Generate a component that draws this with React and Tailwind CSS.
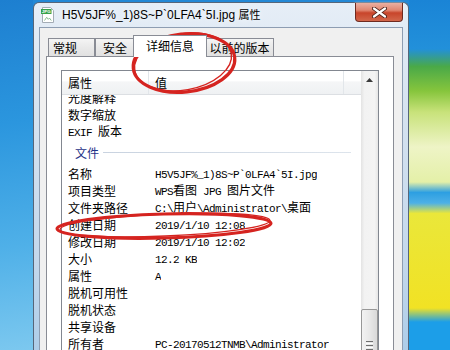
import React from "react";

// splits a string into CJK runs and latin runs (latin is drawn narrow, like SimSun)
const CJK_SPLIT = /([\u3400-\u9fff]+)/;

function Txt({ s }) {
    return s
        .split(CJK_SPLIT)
        .filter(Boolean)
        .map((p, i) =>
            /[\u3400-\u9fff]/.test(p) ? (
                <span
                    key={i}
                    className="text-[12px] tracking-normal [font-family:'Noto_Sans_CJK_SC',sans-serif]"
                >
                    {p}
                </span>
            ) : (
                <span
                    key={i}
                    className="whitespace-pre text-[11px] tracking-[-0.6px] [font-family:'Liberation_Mono','Noto_Sans_CJK_SC',monospace]"
                >
                    {p}
                </span>
            )
        );
}

const topRows = [
    ["光度解释", ""],
    ["数字缩放", ""],
    ["EXIF 版本", ""],
];

const fileRows = [
    ["名称", "H5V5JF%_1)8S~P`0LFA4`5I.jpg"],
    ["项目类型", "WPS看图 JPG 图片文件"],
    ["文件夹路径", "C:\\用户\\Administrator\\桌面"],
    ["创建日期", "2019/1/10 12:08"],
    ["修改日期", "2019/1/10 12:02"],
    ["大小", "12.2 KB"],
    ["属性", "A"],
    ["脱机可用性", ""],
    ["脱机状态", ""],
    ["共享设备", ""],
    ["所有者", "PC-20170512TNMB\\Administrator"],
];

function Row({ name, value }) {
    return (
        <div className="flex h-[17px] items-center leading-[17px] text-black">
            <div className="w-[87px] shrink-0 overflow-hidden whitespace-nowrap pl-[6px]">
                <Txt s={name} />
            </div>
            <div className="overflow-hidden whitespace-nowrap pl-[6px]">
                <Txt s={value} />
            </div>
        </div>
    );
}

function Tab({ label, width, active, extra = "" }) {
    if (active) {
        return (
            <div
                className={`relative z-10 -mb-px flex h-[22px] shrink-0 items-center justify-center border border-b-0 border-[#898c95] bg-white pb-[1px] text-[12px] text-black [font-family:'Noto_Sans_CJK_SC',sans-serif] ${width} ${extra}`}
            >
                {label}
            </div>
        );
    }
    return (
        <div
            className={`flex h-[18px] shrink-0 items-center border border-b-0 border-[#898c95] bg-[linear-gradient(180deg,#f4f4f4,#e9e9e9_50%,#e1e1e1)] text-[12px] text-black [font-family:'Noto_Sans_CJK_SC',sans-serif] ${width} ${extra}`}
        >
            {label}
        </div>
    );
}

export default function App() {
    return (
        <div className="relative flex h-[350px] w-[450px] overflow-hidden bg-[#2388d6]">
            {/* desktop, left */}
            <div className="h-full w-[33px] shrink-0 bg-[linear-gradient(172deg,#1d7fd0_0%,#2b96de_35%,#4fb0e8_70%,#7cc8ef_100%)]" />

            {/* window */}
            <div className="flex w-[376px] shrink-0 flex-col bg-[#2388d6] pt-[2px]">
                <div className="flex flex-1 flex-col rounded-t-[6px] border border-b-0 border-[#56667a] bg-[linear-gradient(180deg,#e6eef7_0%,#d6e3f0_30%,#c4d8ec_70%,#a9cbe8_100%)]">
                    {/* title bar */}
                    <div className="flex h-[24px] shrink-0 items-start">
                        <div className="flex h-full flex-1 items-center pl-[6px]">
                            <svg width="16" height="16" viewBox="0 0 16 16">
                                <path
                                    d="M2.5 0.5h8l3 3v12h-11z"
                                    fill="#fff"
                                    stroke="#a3acb5"
                                />
                                <rect x="1" y="2" width="10.5" height="5" fill="#36a24a" />
                                <text
                                    x="6.2"
                                    y="6.1"
                                    fontSize="4.4"
                                    fill="#fff"
                                    textAnchor="middle"
                                    fontWeight="bold"
                                    fontFamily="Liberation Sans, sans-serif"
                                >
                                    JPG
                                </text>
                                <path
                                    d="M4.5 13.5l2.2-3.2 1.6 2 1.2-1.2 1.8 2.4"
                                    fill="none"
                                    stroke="#78b486"
                                    strokeWidth="0.9"
                                />
                            </svg>
                            <span className="ml-[6px] whitespace-pre text-[12px] text-black [font-family:'Liberation_Sans',sans-serif] [text-shadow:0_0_6px_#ffffff]">
                                H5V5JF%_1)8S~P`0LFA4`5I.jpg{" "}
                                <span className="text-[11px] [font-family:'Noto_Sans_CJK_SC',sans-serif]">
                                    属性
                                </span>
                            </span>
                        </div>
                        <div className="mr-[5px] flex h-[19px] w-[48px] shrink-0 items-center justify-center rounded-b-[4px] border border-t-0 border-[#6e2a20] bg-[linear-gradient(180deg,#eab0a2_0%,#e08670_40%,#c8452b_55%,#d2674b_100%)] shadow-[0_0_3px_#ffffffaa]">
                            <svg width="15" height="11" viewBox="0 0 15 11">
                                <path
                                    d="M2 1.5l11 8M13 1.5l-11 8"
                                    stroke="#4a2018"
                                    strokeWidth="4"
                                    strokeLinecap="round"
                                />
                                <path
                                    d="M2 1.5l11 8M13 1.5l-11 8"
                                    stroke="#ffffff"
                                    strokeWidth="2.2"
                                    strokeLinecap="round"
                                />
                            </svg>
                        </div>
                    </div>

                    {/* client area */}
                    <div className="flex flex-1 flex-col px-[5px]">
                        <div className="flex flex-1 flex-col border border-b-0 border-[#8d9db2] bg-[#f0f0f0] pl-[6px] pr-[8px] pt-[7px]">
                            {/* tabs */}
                            <div className="flex h-[21px] shrink-0 items-end pl-[2px]">
                                <Tab label="常规" width="w-[47px]" extra="pl-[4px]" />
                                <Tab label="安全" width="w-[40px]" extra="justify-center" />
                                <Tab label="详细信息" width="w-[74px]" active extra="-ml-[2px]" />
                                <Tab label="以前的版本" width="w-[69px]" extra="-ml-[2px] justify-center" />
                            </div>

                            {/* tab panel */}
                            <div className="flex flex-1 flex-col border border-b-0 border-[#898c95] bg-white px-[14px] pt-[13px]">
                                <div className="flex border border-b-0 border-[#828790] bg-white">
                                    <div className="flex w-[299px] shrink-0 flex-col">
                                        {/* header */}
                                        <div className="flex h-[24px] shrink-0 border-b border-[#dcdfe3] bg-[linear-gradient(180deg,#ffffff_0%,#ffffff_45%,#f5f6f7_46%,#eff1f3_100%)] text-[12px] text-black [font-family:'Noto_Sans_CJK_SC',sans-serif]">
                                            <div className="flex w-[87px] shrink-0 items-center border-r border-[#e2e6ea] pl-[6px]">
                                                属性
                                            </div>
                                            <div className="flex w-[195px] shrink-0 items-center border-r border-[#e2e6ea] pl-[6px]">
                                                值
                                            </div>
                                            <div className="flex-1" />
                                        </div>
                                        {/* rows */}
                                        <div className="h-[262px] overflow-hidden">
                                            <div className="-mt-[6px]">
                                                {topRows.map(([n, v]) => (
                                                    <Row key={n} name={n} value={v} />
                                                ))}
                                                <div className="flex h-[25px] items-center pl-[13px] pr-[10px]">
                                                    <span className="text-[12px] text-[#1e3287] [font-family:'Noto_Sans_CJK_SC',sans-serif]">
                                                        文件
                                                    </span>
                                                    <div className="ml-[4px] h-px flex-1 bg-[linear-gradient(90deg,#c9d3e0,#dde4ec)]" />
                                                </div>
                                                {fileRows.map(([n, v]) => (
                                                    <Row key={n} name={n} value={v} />
                                                ))}
                                            </div>
                                        </div>
                                    </div>

                                    {/* scrollbar */}
                                    <div className="flex w-[17px] shrink-0 flex-col bg-[linear-gradient(90deg,#e3e3e3,#f2f2f2_20%,#f4f4f4_80%,#e6e6e6)]">
                                        <div className="flex h-[17px] shrink-0 items-center justify-center">
                                            <svg width="7" height="4" viewBox="0 0 7 4">
                                                <polygon points="0,4 3.5,0 7,4" fill="#3a3a3a" />
                                            </svg>
                                        </div>
                                        <div className="h-[221px] shrink-0" />
                                        <div className="flex h-[60px] shrink-0 flex-col items-center rounded-[2px] border border-[#979797] bg-[linear-gradient(90deg,#f2f2f2,#e8e8e8_50%,#d9d9d9)] pt-[31px]">
                                            <div className="flex flex-col gap-[1px]">
                                                <div className="h-px w-[7px] bg-[#6e6e6e]" />
                                                <div className="h-px w-[7px] bg-[#fcfcfc]" />
                                                <div className="h-px w-[7px] bg-[#6e6e6e]" />
                                                <div className="h-px w-[7px] bg-[#fcfcfc]" />
                                                <div className="h-px w-[7px] bg-[#6e6e6e]" />
                                            </div>
                                        </div>
                                    </div>
                                </div>
                            </div>
                        </div>
                    </div>
                </div>
            </div>

            {/* desktop, right */}
            <div className="h-full flex-1 bg-[linear-gradient(180deg,#1a84d6_0%,#2290da_14%,#4aa948_19%,#86c53c_26%,#c8e27a_32%,#eef4c6_42%,#e4f0a8_52%,#2d9fe2_55%,#4db0e6_58%,#eae73a_61%,#f1e224_88%,#1c9ee8_92%,#1c9ee8_100%)]" />

            {/* red hand-drawn marks */}
            <svg
                className="pointer-events-none absolute left-0 top-0"
                width="450"
                height="350"
                viewBox="0 0 450 350"
            >
                <ellipse
                    cx="184"
                    cy="63"
                    rx="51"
                    ry="29"
                    transform="rotate(-6 184 63)"
                    fill="none"
                    stroke="#d52420"
                    strokeWidth="3.2"
                />
                <ellipse
                    cx="183"
                    cy="62"
                    rx="49"
                    ry="28"
                    transform="rotate(-10 183 62)"
                    fill="none"
                    stroke="#d52420"
                    strokeWidth="1.4"
                />
                <ellipse
                    cx="164"
                    cy="226"
                    rx="107"
                    ry="12"
                    transform="rotate(-1.5 164 226)"
                    fill="none"
                    stroke="#d52420"
                    strokeWidth="3.2"
                />
                <ellipse
                    cx="165"
                    cy="225"
                    rx="105"
                    ry="11"
                    transform="rotate(-2.5 165 225)"
                    fill="none"
                    stroke="#d52420"
                    strokeWidth="1.3"
                />
            </svg>
        </div>
    );
}
